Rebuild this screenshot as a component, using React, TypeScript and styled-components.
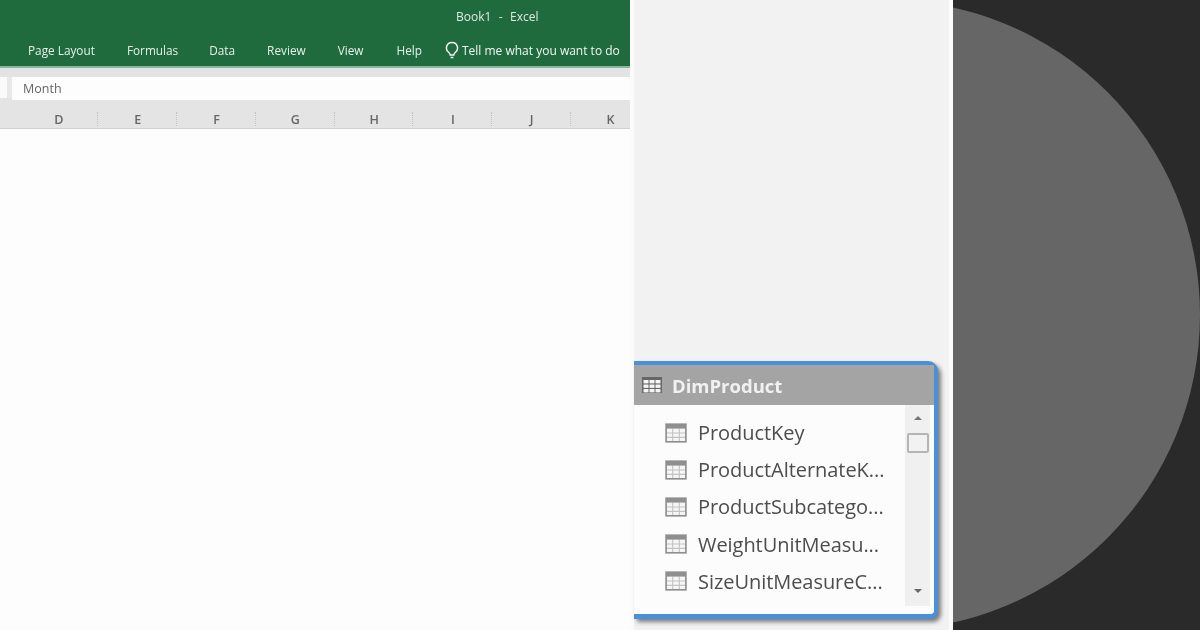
import styled, { createGlobalStyle } from "styled-components";

const GlobalStyle = createGlobalStyle`
  html, body {
    margin: 0;
    padding: 0;
    background: #fefdfe;
  }
`;

const Page = styled.div`
  width: 1200px;
  height: 630px;
  display: grid;
  grid-template-columns: 630px 4px 315px 4px 247px;
  overflow: hidden;
  font-family: "Open Sans", "Liberation Sans", sans-serif;
`;

/* excel side */
const Excel = styled.section`
  display: flex;
  flex-direction: column;
  background: #fefdfe;
  min-width: 0;
`;

const Ribbon = styled.header`
  height: 66px;
  flex: none;
  background: #1f6b3d;
  border-bottom: 2px solid #88b89b;
  box-sizing: content-box;
  display: flex;
  flex-direction: column;
  color: #e6f0ea;
  filter: blur(0.45px);
`;

const TitleText = styled.div`
  height: 34px;
  padding: 7px 0 0 456px;
  box-sizing: border-box;
  font-size: 12px;
  line-height: 20px;
  word-spacing: 0.6px;
  white-space: pre;
  color: #dfeae3;
`;

const Tabs = styled.nav`
  display: flex;
  align-items: center;
  height: 32px;
  padding-top: 2px;
  font-size: 11.8px;
  white-space: nowrap;
`;

const Tab = styled.span<{ $left: number }>`
  margin-left: ${(p) => p.$left}px;
  line-height: 34px;
`;

const TellMe = styled.span`
  display: flex;
  align-items: center;
  gap: 3px;
  margin-left: 23px;
  font-size: 12px;
  color: #f2f7f4;

  svg {
    flex: none;
  }
`;

const GreyStrip = styled.div`
  height: 9px;
  flex: none;
  background: #e4e3e4;
`;

const FormulaBar = styled.div`
  height: 21px;
  flex: none;
  display: grid;
  grid-template-columns: 7px 1fr;
  column-gap: 5px;
  background: #e9e8e9;
`;

const NameBox = styled.div`
  background: #fbfafb;
`;

const FormulaInput = styled.div`
  background: #fefdfe;
  padding-left: 11px;
  font-size: 12.5px;
  line-height: 23px;
  color: #666;
  filter: blur(0.45px);
`;

const ColumnHeaders = styled.div`
  height: 31px;
  flex: none;
  padding-top: 12px;
  box-sizing: border-box;
  display: grid;
  grid-template-columns: 19.5px repeat(8, 78.8px);
  background: #e5e4e5;
  border-bottom: 1px solid #d2d1d2;
`;

const ColumnHead = styled.div`
  display: flex;
  align-items: center;
  justify-content: center;
  font-size: 12.5px;
  font-weight: 600;
  color: #666;
  position: relative;
  filter: blur(0.45px);

  &:not(:last-child)::after {
    content: "";
    position: absolute;
    right: 0;
    top: 2px;
    height: 14px;
    border-right: 1px dotted #c4c3c4;
  }
`;

const Sheet = styled.div`
  flex: 1;
  background: #fefdfe;
`;

const Gutter = styled.div`
  background: #fbfbfb;
`;

/* model diagram side */
const Diagram = styled.section`
  background: #f2f2f2;
  display: flex;
  flex-direction: column;
  justify-content: flex-end;
  padding: 0 11px 11px 0;
`;

const TableCard = styled.div`
  height: 258px;
  box-sizing: border-box;
  display: flex;
  flex-direction: column;
  background: #fcfcfc;
  border: solid #4a90d6;
  border-width: 4px 4px 5px 0;
  border-radius: 0 10px 8px 0;
  box-shadow: 3px 3px 4px rgba(60, 60, 60, 0.65);
  filter: blur(0.55px);
`;

const CardHeader = styled.div`
  height: 40px;
  flex: none;
  display: flex;
  align-items: center;
  gap: 10px;
  padding-left: 8px;
  background: #a4a4a4;
  color: #f1f1f1;
  font-size: 18.5px;
  font-weight: 700;
`;

const CardBody = styled.div`
  flex: 1;
  display: grid;
  grid-template-columns: 1fr 29px;
  min-height: 0;
`;

const FieldList = styled.ul`
  list-style: none;
  margin: 0;
  padding: 9px 0 0 31px;
`;

const Field = styled.li`
  display: flex;
  align-items: center;
  gap: 11px;
  height: 37.2px;
  font-size: 20px;
  letter-spacing: -0.05px;
  color: #4d4d4d;
  white-space: nowrap;
`;

const Scrollbar = styled.div`
  display: flex;
  flex-direction: column;
  align-items: center;
  margin-right: 4px;
  padding-top: 11px;
  box-sizing: border-box;
  background: #f0f0f0;
  height: 201px;
`;

const ScrollArrow = styled.div<{ $down?: boolean }>`
  width: 0;
  height: 0;
  border-left: 4px solid transparent;
  border-right: 4px solid transparent;
  ${(p) =>
    p.$down
      ? "border-top: 4px solid #666; margin-top: 136px;"
      : "border-bottom: 4px solid #777;"}
`;

const ScrollThumb = styled.div`
  width: 22px;
  height: 20px;
  margin-top: 13px;
  box-sizing: border-box;
  background: #f2f2f2;
  border: 2px solid #b5b5b5;
  border-radius: 2px;
`;

/* dark side */
const DarkPanel = styled.aside`
  background: #2a2a2a;
  display: flex;
  align-items: center;
  justify-content: flex-end;
  overflow: hidden;
`;

const Circle = styled.div`
  width: 630px;
  height: 630px;
  flex: none;
  border-radius: 50%;
  background: #666;
`;

const columns = ["D", "E", "F", "G", "H", "I", "J", "K"];
const fields = [
  "ProductKey",
  "ProductAlternateK...",
  "ProductSubcatego...",
  "WeightUnitMeasu...",
  "SizeUnitMeasureC...",
];

function TableIcon({ size, color }: { size: number; color: string }) {
  return (
    <svg width={size} height={size} viewBox="0 0 20 20" fill="none">
      <rect x="1" y="2" width="18" height="16" stroke={color} strokeWidth="1.5" fill="#f6f6f6" />
      <rect x="1" y="2" width="18" height="4" fill={color} />
      <path d="M7 6v12M13 6v12M1 10h18M1 14h18" stroke={color} strokeWidth="1" opacity="0.5" />
    </svg>
  );
}

function GridIcon() {
  return (
    <svg width="20" height="16" viewBox="0 0 20 16" fill="#f4f4f4">
      <rect x="0" y="0" width="20" height="16" fill="#666" />
      {[1.5, 7.5, 13.5].map((x) =>
        [3, 7.5, 12].map((y) => <rect key={`${x}-${y}`} x={x} y={y} width="5" height="3.4" />)
      )}
    </svg>
  );
}

export default function App() {
  return (
    <Page>
      <GlobalStyle />
      <Excel>
        <Ribbon>
          <TitleText>Book1  -  Excel</TitleText>
          <Tabs>
            <Tab $left={28}>Page Layout</Tab>
            <Tab $left={32}>Formulas</Tab>
            <Tab $left={31}>Data</Tab>
            <Tab $left={32}>Review</Tab>
            <Tab $left={32}>View</Tab>
            <Tab $left={33}>Help</Tab>
            <TellMe>
              <svg width="14" height="19" viewBox="0 0 14 19" fill="none" stroke="#f2f7f4" strokeWidth="1.5">
                <path d="M7 1.5a5.5 5.5 0 0 0-3.2 10c.8.6 1.2 1.3 1.4 2.5h3.6c.2-1.2.6-1.9 1.4-2.5A5.5 5.5 0 0 0 7 1.5z" />
                <path d="M5.6 16.5h2.8" />
              </svg>
              Tell me what you want to do
            </TellMe>
          </Tabs>
        </Ribbon>
        <GreyStrip />
        <FormulaBar>
          <NameBox />
          <FormulaInput>Month</FormulaInput>
        </FormulaBar>
        <ColumnHeaders>
          <div />
          {columns.map((c) => (
            <ColumnHead key={c}>{c}</ColumnHead>
          ))}
        </ColumnHeaders>
        <Sheet />
      </Excel>
      <Gutter />
      <Diagram>
        <TableCard>
          <CardHeader>
            <GridIcon />
            DimProduct
          </CardHeader>
          <CardBody>
            <FieldList>
              {fields.map((f) => (
                <Field key={f}>
                  <TableIcon size={22} color="#8f8f8f" />
                  {f}
                </Field>
              ))}
            </FieldList>
            <Scrollbar>
              <ScrollArrow />
              <ScrollThumb />
              <ScrollArrow $down />
            </Scrollbar>
          </CardBody>
        </TableCard>
      </Diagram>
      <Gutter />
      <DarkPanel>
        <Circle />
      </DarkPanel>
    </Page>
  );
}
